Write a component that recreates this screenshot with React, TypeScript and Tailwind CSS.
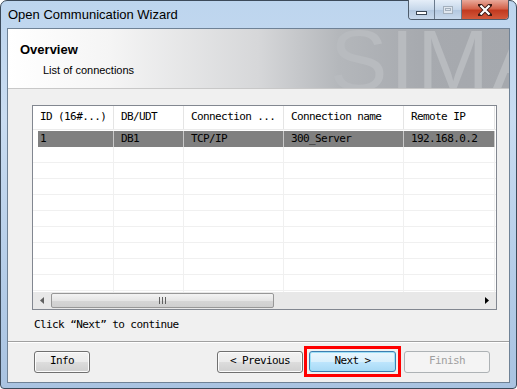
const cols = [
  { w: 'w-[81px]', title: 'ID (16#...)', value: '1' },
  { w: 'w-[70px]', title: 'DB/UDT', value: 'DB1' },
  { w: 'w-[100px]', title: 'Connection ...', value: 'TCP/IP' },
  { w: 'w-[120px]', title: 'Connection name', value: '300_Server' },
  { w: 'w-[91px]', title: 'Remote IP', value: '192.168.0.2' },
];

const mono = "font-['DejaVu_Sans_Mono',monospace] text-[11px] tracking-[-0.6px] text-black";

function WinButton({ label, className = '', disabled = false }: { label: string; className?: string; disabled?: boolean }) {
  return (
    <div
      className={`h-[22px] rounded-[3px] border flex items-center justify-center ${mono} ${
        disabled
          ? 'border-[#adb2b5] bg-[#f4f4f4] !text-[#a0a0a0]'
          : 'border-[#707070] bg-[linear-gradient(#f2f2f2_0%,#ebebeb_50%,#dddddd_51%,#cfcfcf_100%)] shadow-[inset_0_0_0_1px_#fcfcfc]'
      } ${className}`}
    >
      {label}
    </div>
  );
}

export default function App() {
  return (
    <div className="w-[517px] h-[389px] overflow-hidden bg-white">
      <div className="w-[517px] h-[389px] flex flex-col rounded-t-[7px] rounded-b-[4px] border border-[#3c4a5a] bg-[linear-gradient(180deg,#bdd5ee_0%,#c9dcf1_30%,#b5cde8_70%,#a9c3e1_100%)]">
        {/* title bar */}
        <div className="h-[27px] flex items-start shrink-0">
          <span className="pl-[7px] pt-[6px] font-['Liberation_Sans',sans-serif] text-[13px] leading-[16px] text-black">
            Open Communication Wizard
          </span>
          <div className="ml-auto mr-[7px] -mt-px flex h-[20px] rounded-b-[4px] border border-t-0 border-[#4e5c6c] overflow-hidden">
            <div className="w-[26px] flex items-end justify-center pb-[4px] border-r border-[#6a7a8c] bg-[linear-gradient(#e5eef8,#c6d7ea_50%,#b2c7df_51%,#c8d9ec)]">
              <div className="w-[11px] h-[4px] bg-white border border-[#3a4654]" />
            </div>
            <div className="w-[27px] flex items-center justify-center border-r border-[#6a7a8c] bg-[linear-gradient(#e5eef8,#c6d7ea_50%,#b2c7df_51%,#c8d9ec)]">
              <div className="w-[10px] h-[8px] border border-[#a4b0bd] bg-[#dfe6ee] flex items-center justify-center">
                <div className="w-[6px] h-[3px] border border-[#a4b0bd]" />
              </div>
            </div>
            <div className="w-[46px] flex items-center justify-center bg-[linear-gradient(#e9a99a,#d4644c_45%,#c23a20_55%,#d35a3c)]">
              <svg width="14" height="12" viewBox="0 0 14 12">
                <path d="M2 1 L12 11 M12 1 L2 11" stroke="#3b1a14" strokeWidth="4" strokeLinecap="square" />
                <path d="M2.5 1.5 L11.5 10.5 M11.5 1.5 L2.5 10.5" stroke="#ffffff" strokeWidth="2.2" />
              </svg>
            </div>
          </div>
        </div>

        {/* client area */}
        <div className="mx-[6px] h-[355px] shrink-0 border border-[#6f8296] bg-[#f0f0f0] flex flex-col">
          {/* header */}
          <div className="relative h-[60px] shrink-0 overflow-hidden border-b border-[#c8c8c8] bg-[linear-gradient(90deg,#ffffff_0%,#f5f5f5_20%,#d6d7d9_50%,#b4b7bb_66%,#a7aaaf_82%,#a5a8ad_100%)]">
            <span className="absolute left-[322px] top-[-12px] font-['Liberation_Sans',sans-serif] text-[86px] leading-none tracking-[3px] text-[#b8bbbf] select-none">
              SIMA
            </span>
            <div className="relative pl-[12px] pt-[13px] font-['Liberation_Sans',sans-serif] text-black">
              <div className="text-[13px] font-bold leading-[16px]">Overview</div>
              <div className="pl-[23px] pt-[5px] text-[11px] leading-[14px]">List of connections</div>
            </div>
          </div>

          {/* body */}
          <div className="flex flex-col pt-[16px]">
            <div className="ml-[24px] w-[465px] h-[205px] border border-[#828790] bg-white flex flex-col overflow-hidden">
              {/* header row */}
              <div className="flex h-[24px] border-b border-[#ebebeb] shrink-0">
                {cols.map((c) => (
                  <div key={c.title} className={`${c.w} shrink-0 border-r border-[#e5e5e5] pl-[7px] flex items-center whitespace-nowrap overflow-hidden ${mono}`}>
                    {c.title}
                  </div>
                ))}
              </div>
              {/* data row */}
              <div className="flex h-[16px] mt-px shrink-0">
                <div className="w-[5px] shrink-0" />
                {cols.map((c, i) => (
                  <div
                    key={c.title}
                    className={`${i === 0 ? 'w-[76px] pl-[2px]' : c.w + ' pl-[7px]'} shrink-0 bg-[#808080] border-r border-[#c8c8c8] flex items-center whitespace-nowrap ${mono}`}
                  >
                    {c.value}
                  </div>
                ))}
              </div>
              {/* empty rows */}
              <div className="h-[145px] shrink-0 overflow-hidden">
                {Array.from({ length: 10 }).map((_, r) => (
                  <div key={r} className="flex h-[16px] border-b border-[#f0f0f0]">
                    {cols.map((c) => (
                      <div key={c.title} className={`${c.w} shrink-0 border-r border-[#f0f0f0]`} />
                    ))}
                  </div>
                ))}
              </div>
              {/* scrollbar */}
              <div className="flex h-[17px] shrink-0 bg-[#e8e8e8] items-center">
                <div className="w-[18px] h-full flex items-center justify-center">
                  <svg width="4" height="7" viewBox="0 0 4 7">
                    <path d="M4 0 L0 3.5 L4 7 Z" fill="#606060" />
                  </svg>
                </div>
                <div className="w-[223px] h-[15px] rounded-[2px] border border-[#979797] bg-[linear-gradient(#f3f3f3,#e5e5e5_50%,#d6d6d6_51%,#cfcfcf)] flex items-center justify-center gap-[2px]">
                  <div className="w-px h-[7px] bg-[#606060]" />
                  <div className="w-px h-[7px] bg-[#606060]" />
                  <div className="w-px h-[7px] bg-[#606060]" />
                </div>
                <div className="ml-auto w-[18px] h-full flex items-center justify-center">
                  <svg width="4" height="7" viewBox="0 0 4 7">
                    <path d="M0 0 L4 3.5 L0 7 Z" fill="#000000" />
                  </svg>
                </div>
              </div>
            </div>

            <div className={`ml-[26px] mt-[8px] h-[14px] leading-[14px] ${mono}`}>Click “Next” to continue</div>

            <div className="mt-[9px] h-[2px] border-t border-[#a0a0a0] border-b border-b-white" />

            {/* buttons */}
            <div className="mt-[3px] h-[31px] flex items-center pl-[26px]">
              <WinButton label="Info" className="w-[56px]" />
              <WinButton label="< Previous" className="ml-[127px] w-[86px]" />
              <div className="ml-[1px] border-[3px] border-[#ff0000] p-[2px]">
                <div className="w-[87px] h-[21px] rounded-[3px] border border-[#3c7fb1] shadow-[inset_0_0_0_1px_#9fe0f7] bg-[linear-gradient(#eaf6fd_0%,#d9f0fc_50%,#bee6fd_51%,#a7d9f5_100%)] flex items-center justify-center">
                  <span className={mono}>Next &gt;</span>
                </div>
              </div>
              <WinButton label="Finish" disabled className="ml-[3px] w-[86px]" />
            </div>
          </div>
        </div>
      </div>
    </div>
  );
}
